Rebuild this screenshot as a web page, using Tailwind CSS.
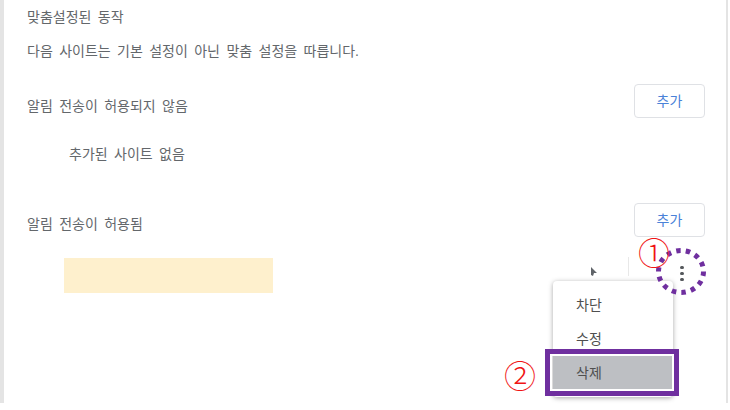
<!DOCTYPE html>
<html lang="ko">
<head>
    <meta charset="UTF-8">
    <title>맞춤설정된 동작</title>
    <script src="https://cdn.jsdelivr.net/npm/@tailwindcss/browser@4"></script>
</head>
<body class="bg-white w-[730px] h-[410px] overflow-hidden font-['Liberation_Sans','Noto_Sans_CJK_KR',sans-serif]">
    <!-- Settings card -->
    <div class="relative w-[728px] h-[403px] bg-white border-l-4 border-r-2 border-[#e4e4e4] pt-[7px] pl-[23px] pr-[21px] text-[14px] [word-spacing:2.5px] text-[#63676b]">
        <p class="h-5 leading-5">맞춤설정된 동작</p>
        <p class="h-5 mt-[14px] leading-5">다음 사이트는 기본 설정이 아닌 맞춤 설정을 따릅니다.</p>

        <!-- Blocked list -->
        <div class="flex items-center justify-between mt-[23px] h-[34px]">
            <span class="mt-[10px]">알림 전송이 허용되지 않음</span>
            <button class="w-[71px] h-[34px] rounded border border-[#dfe1e5] text-[#4a82d8]">추가</button>
        </div>
        <p class="h-5 mt-[26px] ml-[42px] leading-5">추가된 사이트 없음</p>

        <!-- Allowed list -->
        <div class="flex items-center justify-between mt-[39px] h-[34px]">
            <span class="mt-[8px]">알림 전송이 허용됨</span>
            <button class="w-[71px] h-[34px] rounded border border-[#dfe1e5] text-[#4a82d8]">추가</button>
        </div>
        <div class="flex items-center mt-[21px] ml-[37px] h-[35px]">
            <div class="w-[209px] h-[35px] shrink-0 bg-[#fef0cd]"></div>
            <svg class="ml-[317px] mt-[-8px] w-[8px] h-[10px] shrink-0" viewBox="0 0 8 10"><path d="M1 0 L7 6 L4 6 L3 9 L1 8 Z" fill="#5f6368"/></svg>
            <div class="ml-[30px] w-px h-[19px] mt-[-18px] shrink-0 bg-[#e8e8e8]"></div>
            <div class="ml-[51px] mt-[-4px] flex flex-col gap-[2.5px] shrink-0">
                <span class="w-[3.5px] h-[3.5px] rounded-full bg-[#55585c]"></span>
                <span class="w-[3.5px] h-[3.5px] rounded-full bg-[#55585c]"></span>
                <span class="w-[3.5px] h-[3.5px] rounded-full bg-[#55585c]"></span>
            </div>
        </div>

        <!-- Row menu -->
        <div class="absolute left-[549px] top-[281px] w-[120px] h-[116px] bg-white rounded shadow-[0_1px_5px_rgba(0,0,0,0.35)] pt-[7px] text-[#4f4f4f]">
            <div class="h-[34px] pl-[23px] leading-[34px]">차단</div>
            <div class="h-[34px] pl-[23px] leading-[34px]">수정</div>
            <div class="h-[34px] pl-[23px] leading-[34px] bg-[#bdbfc3]">삭제</div>
        </div>

        <!-- Annotations -->
        <div class="absolute left-[541px] top-[349px] w-[134px] h-[47px] border-[5px] border-[#6f2f9f] shadow-[inset_0_0_0_2px_white]"></div>
        <svg class="absolute left-[652px] top-[248px] w-[50px] h-[47px]" viewBox="0 0 50 47">
            <ellipse cx="25" cy="23.5" rx="22.5" ry="21" fill="none" stroke="#6f2f9f" stroke-width="5" stroke-dasharray="4.5 5.2"/>
        </svg>
        <span class="absolute left-[636px] top-[237px] w-[28px] h-[28px] flex items-center justify-center font-['Noto_Sans_CJK_KR',sans-serif] font-light text-[#f01414] text-[32px] leading-[28px]">①</span>
        <span class="absolute left-[502px] top-[360px] w-[28px] h-[28px] flex items-center justify-center font-['Noto_Sans_CJK_KR',sans-serif] font-light text-[#f01414] text-[32px] leading-[28px]">②</span>
    </div>
</body>
</html>
